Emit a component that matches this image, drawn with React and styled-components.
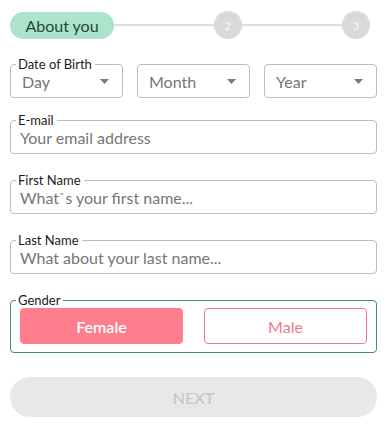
import React, { useState } from "react";
import styled, { createGlobalStyle } from "styled-components";

const GlobalStyle = createGlobalStyle`
  body {
    margin: 0;
    background: #ffffff;
    font-family: "Lato", "Open Sans", sans-serif;
  }
`;

const Caret = () => (
  <svg width="9" height="5" viewBox="0 0 9 5">
    <path d="M0 0 L9 0 L4.5 5 Z" fill="#7a7a7a" />
  </svg>
);

const App = () => {
  const [gender, setGender] = useState("female");

  return (
    <Page>
      <GlobalStyle />
      <Stepper>
        <StepPill>About you</StepPill>
        <StepLine />
        <StepDot>2</StepDot>
        <StepLine />
        <StepDot>3</StepDot>
      </Stepper>

      <Form>
        <DateRow>
          <Field>
            <Legend>Date of Birth</Legend>
            <Select>
              <span>Day</span>
              <Caret />
            </Select>
          </Field>
          <Field $bare>
            <Select>
              <span>Month</span>
              <Caret />
            </Select>
          </Field>
          <Field $bare>
            <Select>
              <span>Year</span>
              <Caret />
            </Select>
          </Field>
        </DateRow>

        <Field>
          <Legend>E-mail</Legend>
          <Input placeholder="Your email address" />
        </Field>

        <Field>
          <Legend>First Name</Legend>
          <Input placeholder="What`s your first name..." />
        </Field>

        <Field>
          <Legend>Last Name</Legend>
          <Input placeholder="What about your last name..." />
        </Field>

        <Field $accent>
          <Legend>Gender</Legend>
          <GenderRow>
            <GenderBtn
              $active={gender === "female"}
              onClick={() => setGender("female")}
            >
              Female
            </GenderBtn>
            <GenderBtn
              $active={gender === "male"}
              onClick={() => setGender("male")}
            >
              Male
            </GenderBtn>
          </GenderRow>
        </Field>

        <NextBtn disabled>NEXT</NextBtn>
      </Form>
    </Page>
  );
};

export default App;

const Page = styled.div`
  width: 387px;
  box-sizing: border-box;
  padding: 11px 10px 0 10px;
`;

const Stepper = styled.div`
  display: flex;
  align-items: center;
  margin-right: 7px;
`;

const StepPill = styled.div`
  width: 104px;
  height: 27px;
  border-radius: 14px;
  background: #abe3cc;
  color: #1f4a38;
  font-size: 16px;
  display: flex;
  align-items: center;
  justify-content: center;
  flex-shrink: 0;
`;

const StepLine = styled.div`
  flex: 1;
  height: 2px;
  background: #dedede;
`;

const StepDot = styled.div`
  width: 28px;
  height: 28px;
  border-radius: 50%;
  background: #d9d9d9;
  color: #f4f4f4;
  font-size: 11px;
  font-weight: 700;
  display: flex;
  align-items: center;
  justify-content: center;
  flex-shrink: 0;
`;

const Form = styled.div`
  display: flex;
  flex-direction: column;
  gap: 19px;
  margin-top: 18px;
`;

const DateRow = styled.div`
  display: grid;
  grid-template-columns: repeat(3, 1fr);
  column-gap: 14px;
  align-items: end;
  margin-bottom: -4px;
`;

const Field = styled.fieldset`
  margin: 0;
  min-width: 0;
  padding: ${(p) => (p.$bare ? "6px" : "0")} 9px
    ${(p) => (p.$accent ? "8px" : "6px")} 9px;
  border: 1px solid ${(p) => (p.$accent ? "#3f8f72" : "#bdbdbd")};
  border-radius: 4px;
`;

const Legend = styled.legend`
  font-size: 13px;
  line-height: 14px;
  color: #1a1a1a;
  padding: 0 3px 0 2px;
  margin-left: -4px;
`;

const Input = styled.input`
  display: block;
  width: 100%;
  height: 20px;
  padding: 0;
  border: none;
  outline: none;
  font-family: inherit;
  font-size: 16px;
  color: #333;
  &::placeholder {
    color: #767676;
  }
`;

const Select = styled.div`
  height: 20px;
  padding: 0 4px 0 2px;
  display: flex;
  align-items: center;
  justify-content: space-between;
  font-size: 16px;
  color: #767676;
`;

const GenderRow = styled.div`
  display: grid;
  grid-template-columns: 1fr 1fr;
  column-gap: 21px;
  margin-top: 1px;
`;

const GenderBtn = styled.button`
  height: 36px;
  border-radius: 4px;
  font-family: inherit;
  font-size: 16px;
  cursor: pointer;
  border: 1px solid ${(p) => (p.$active ? "#ff7e8e" : "#e57c95")};
  background: ${(p) => (p.$active ? "#ff7e8e" : "#ffffff")};
  color: ${(p) => (p.$active ? "#ffffff" : "#f07890")};
  font-weight: ${(p) => (p.$active ? 600 : 400)};
`;

const NextBtn = styled.button`
  height: 40px;
  margin-top: 5px;
  border: none;
  border-radius: 20px;
  background: #e8e8e8;
  color: #c6c6c6;
  font-family: inherit;
  font-size: 16px;
  font-weight: 500;
`;
